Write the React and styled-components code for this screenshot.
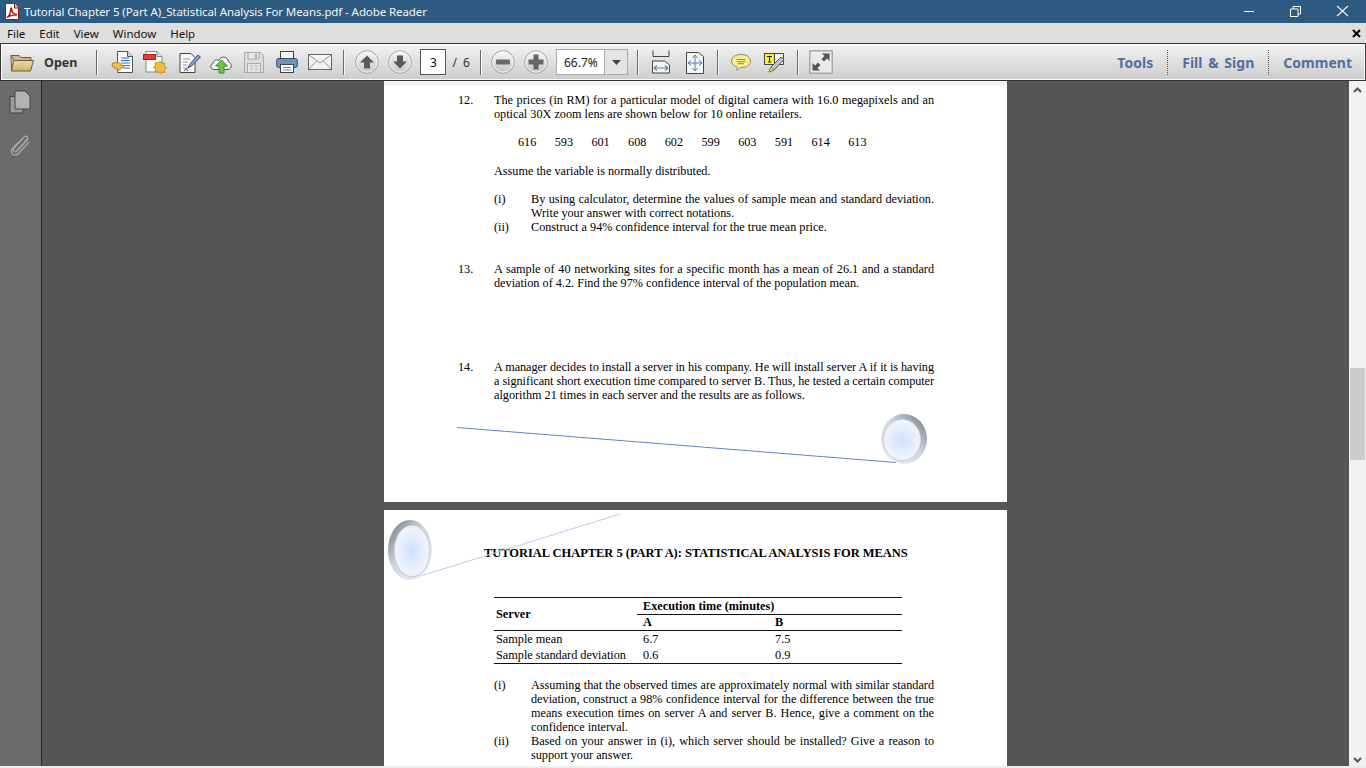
import React from "react";
import styled, { createGlobalStyle } from "styled-components";

const GlobalStyle = createGlobalStyle`
  html, body {
    margin: 0;
    padding: 0;
    height: 100%;
    overflow: hidden;
  }
  #root {
    height: 100%;
  }
`;

const Window = styled.div`
  display: flex;
  flex-direction: column;
  width: 1366px;
  height: 768px;
  overflow: hidden;
  background: #555;
  font-family: "Noto Sans", "Open Sans", sans-serif;
`;

const TitleBar = styled.div`
  display: flex;
  align-items: center;
  flex: none;
  height: 23px;
  padding-left: 5px;
  background: #2c5a80;
  color: #fff;
  font-size: 11.5px;
`;

const TitleText = styled.span`
  margin-left: 5px;
  letter-spacing: -0.09px;
  color: #f2f6fa;
`;

const WindowControls = styled.div`
  display: flex;
  align-items: center;
  margin-left: auto;
  padding-right: 17px;
  gap: 35px;
`;

const MenuBar = styled.div`
  display: flex;
  align-items: center;
  flex: none;
  height: 20px;
  padding: 0 5px 0 7px;
  gap: 14px;
  background: #dedede;
  color: #111;
  font-size: 11.5px;
  letter-spacing: -0.03px;
`;

const MenuClose = styled.span`
  display: flex;
  margin-left: auto;
`;

const Toolbar = styled.div`
  display: flex;
  align-items: center;
  flex: none;
  box-sizing: border-box;
  height: 38px;
  padding-left: 9px;
  border: 1px solid #333;
  border-right-color: #444;
  box-shadow: inset 0 0 0 1px #fafafa;
  background: linear-gradient(#f3f3f3, #cccccc);
`;

const OpenLabel = styled.span`
  margin-left: 10px;
  margin-right: 19px;
  font-size: 12.5px;
  font-weight: 700;
  color: #333;
`;

const Separator = styled.span`
  flex: none;
  width: 1px;
  height: 25px;
  margin: ${(p) => p.$m || "0 11px"};
  background: #6a6a6a;
  box-shadow: 1px 0 0 #f8f8f8;
`;

const ToolIcon = styled.svg`
  flex: none;
  display: block;
  width: ${(p) => p.$w || 24}px;
  height: 24px;
  margin-right: ${(p) => p.$gap ?? 8}px;
`;

const PageBox = styled.span`
  box-sizing: border-box;
  display: flex;
  align-items: center;
  justify-content: center;
  flex: none;
  width: 26px;
  height: 26px;
  border: 1px solid #555;
  background: #fff;
  color: #111;
  font-size: 12px;
`;

const PageTotal = styled.span`
  margin: 0 9px 0 6px;
  width: 19px;
  flex: none;
  font-size: 12px;
  color: #333;
  word-spacing: 3px;
  white-space: nowrap;
`;

const ZoomBox = styled.div`
  display: flex;
  flex: none;
  box-sizing: border-box;
  width: 72px;
  height: 26px;
  border: 1px solid #f8f8f8;
  outline: 1px solid #aaa;
  outline-offset: -1px;
  background: #fff;
`;

const ZoomValue = styled.span`
  flex: 1;
  display: flex;
  align-items: center;
  justify-content: center;
  color: #222;
  font-size: 12px;
`;

const ZoomArrow = styled.span`
  display: flex;
  align-items: center;
  justify-content: center;
  width: 22px;
  border-left: 1px solid #aaa;
  background: #e4e4e4;
`;

const ToolTabs = styled.div`
  display: flex;
  align-items: center;
  margin-left: auto;
  height: 25px;
  padding-right: 13px;
`;

const ToolTab = styled.span`
  display: flex;
  align-items: center;
  height: 100%;
  padding: 0 14px;
  border-left: ${(p) => (p.$first ? "0" : "1px dotted #555")};
  font-size: 14px;
  font-weight: 700;
  letter-spacing: 0.02px;
  word-spacing: 2px;
  color: #50709c;
  &:last-child {
    padding-right: 0;
  }
`;

const Body = styled.div`
  display: flex;
  flex: 1;
  min-height: 0;
`;

const SideRail = styled.div`
  display: flex;
  flex-direction: column;
  align-items: center;
  flex: none;
  box-sizing: border-box;
  width: 42px;
  padding: 9px 1px 0 0;
  gap: 19px;
  background: #6b6b6b;
  border-right: 1px solid #262626;
`;

const Canvas = styled.div`
  display: flex;
  flex-direction: column;
  align-items: center;
  flex: 1;
  min-width: 0;
  gap: 8px;
  overflow: hidden;
  background: #555;
`;

const Page = styled.div`
  position: relative;
  flex: none;
  box-sizing: border-box;
  width: 623px;
  height: ${(p) => p.$h}px;
  padding: ${(p) => p.$pad};
  border-top: ${(p) => (p.$shaded ? "4px solid #f1f1f1" : "0")};
  background: #fff;
  color: #000;
  font-family: "Liberation Serif", "Times New Roman", serif;
  font-size: 12.23px;
  line-height: 14px;
`;

const Question = styled.div`
  display: flex;
  margin-top: ${(p) => p.$top || 0}px;
`;

const Num = styled.span`
  flex: none;
  width: 36px;
`;

const QuestionBody = styled.div`
  width: 440px;
`;

const Para = styled.p`
  margin: ${(p) => p.$top || 0}px 0 0;
  text-align: ${(p) => (p.$plain ? "left" : "justify")};
`;

const FullLine = styled.span`
  display: block;
  white-space: nowrap;
  letter-spacing: ${(p) => p.$track || 0}px;
  text-align: justify;
  text-align-last: ${(p) => (p.$last ? "left" : "justify")};
`;

const NumberRow = styled.div`
  display: flex;
  margin: 14px 0 0 24px;
`;

const NumberCell = styled.span`
  width: 36.7px;
`;

const SubItem = styled.div`
  display: flex;
  margin-top: ${(p) => p.$top || 0}px;
`;

const SubMark = styled.span`
  flex: none;
  width: 37px;
`;

const SubText = styled.div`
  flex: 1;
  text-align: justify;
`;

const Decoration = styled.svg`
  position: absolute;
  overflow: visible;
  left: 0;
  top: 0;
  width: 623px;
  height: ${(p) => p.$h}px;
  pointer-events: none;
`;

const Heading = styled.h2`
  margin: 0;
  font-size: 12.44px;
  line-height: 14px;
  font-weight: 700;
  white-space: nowrap;
`;

const DataTable = styled.table`
  width: 408px;
  margin: 37px 0 0 10px;
  border-collapse: collapse;
  table-layout: fixed;
  border-top: 1px solid #111;
  border-bottom: 1px solid #111;
  line-height: 15px;
  font-size: 12.26px;
`;

const Cell = styled.td`
  padding: ${(p) => p.$pt ?? 0}px 0 0 ${(p) => p.$pl ?? 2}px;
  height: ${(p) => p.$h ?? 16}px;
  font-weight: ${(p) => (p.$bold ? 700 : 400)};
  border-bottom: ${(p) => (p.$rule ? "1px solid #111" : "0")};
  white-space: nowrap;
`;

const Sub2 = styled.div`
  width: 440px;
  margin: 14px 0 0 10px;
`;

const StatusEdge = styled.div`
  flex: none;
  height: 2px;
  background: #ececec;
`;

const Scrollbar = styled.div`
  display: flex;
  flex-direction: column;
  align-items: center;
  flex: none;
  box-sizing: border-box;
  width: 17px;
  padding-top: 6px;
  background: #f1f1f1;
`;

const ScrollThumb = styled.div`
  width: 15px;
  height: 92px;
  margin-top: 275px;
  background: #cdcdcd;
`;

const ScrollDown = styled.div`
  margin-top: auto;
  padding-bottom: 3px;
  display: flex;
`;

const AdobeLogo = () => (
  <svg width="14" height="17" viewBox="0 0 14 17">
    <path d="M.5.5h9.500l3.500 3.500v12.500H.5z" fill="#fff" stroke="#8c1c1c" />
    <path d="M9.500 1v4h4" fill="#c9c0c0" stroke="#8c1c1c" />
    <path
      d="M2 14.500c2.500-1.500 3.500-5 3.800-8.500.2-1.500 1-1 .9.500-.2 2 1.800 5 5.300 5.300-3 0-7.500.7-10 2.700z"
      fill="none"
      stroke="#b01818"
      strokeWidth="1.500"
    />
  </svg>
);

const Minimize = () => (
  <svg width="11" height="11" viewBox="0 0 11 11">
    <path d="M0 5.500h10" stroke="#fff" />
  </svg>
);

const Restore = () => (
  <svg width="11" height="11" viewBox="0 0 11 11">
    <path d="M.500 3h7.500v7.500H.500zM3 3V.500h7.500V8H8" fill="none" stroke="#fff" />
  </svg>
);

const CloseIcon = () => (
  <svg width="13" height="13" viewBox="0 0 13 13">
    <path d="M1 1l11 10M12 1L1 11" stroke="#f4f4f4" strokeWidth="1.100" />
  </svg>
);

const Folder = () => (
  <ToolIcon $w={24} $gap={0} viewBox="0 0 24 24">
    <defs>
      <linearGradient id="fd" x1="0" y1="0" x2="0" y2="1">
        <stop offset="0" stopColor="#f8eec0" />
        <stop offset="1" stopColor="#d0b26a" />
      </linearGradient>
    </defs>
    <path d="M1 5.500h8l2 2h10v3H4z" fill="#cdb98c" stroke="#6d5c3c" />
    <path d="M1.500 21 1 5.500M3.500 10.500h20l-3 10.500H1.500z" fill="url(#fd)" stroke="#6d5c3c" />
  </ToolIcon>
);

const ConvertIcon = () => (
  <ToolIcon viewBox="0 0 24 24">
    <path d="M6.500 1.500h10l5 5v16h-15z" fill="#fff" stroke="#555" />
    <path d="M16.500 1.500v5h5" fill="#ddd" stroke="#555" />
    <path d="M10 8h8M10 10.500h9M10 13h9M10 15.500h9M12 18h7" stroke="#2f6fd0" strokeWidth="1.200" />
    <path d="M1 14c1-1.500 3-1.500 5.500-1v-1.500l6 5-6 5V19c-3 0-5.500-2-5.500-5z" fill="#eebf58" stroke="#b17f22" />
  </ToolIcon>
);

const CreateIcon = () => (
  <ToolIcon $gap={12} viewBox="0 0 24 24">
    <path d="M3 1.500h11l5 5V22H3z" fill="#fbfbfb" stroke="#888" />
    <path d="M14 1.500v5h5" fill="#ddd" stroke="#888" />
    <rect x="0.500" y="4.500" width="12" height="5" fill="#e43c3c" stroke="#a82020" />
    <path
      d="M17 11l1.800 2.500 3-.5-.5 3 2.500 1.800-2.500 1.800.5 3-3-.5L17 24l-1.800-2.400-3 .5.500-3-2.500-1.800 2.500-1.800-.5-3 3 .5z"
      fill="#f3bb3c"
      stroke="#b78420"
      strokeWidth=".8"
    />
  </ToolIcon>
);

const EditIcon = () => (
  <ToolIcon $w={22} $gap={8} viewBox="0 0 22 24">
    <path d="M1 3.500h11l4 4v15H1z" fill="#f8f8f8" stroke="#444" />
    <path d="M4 9h7M4 12h5M4 15h4M4 18h5" stroke="#999" />
    <path d="M9 18l1.500-3.500L19 5l2.500 2.200L12.500 16z" fill="#7fa3d2" stroke="#3a4f75" />
    <path d="M5 21c1-1 2-3 3-2 .5 1-1 2 1 1" stroke="#444" fill="none" />
  </ToolIcon>
);

const CloudIcon = () => (
  <ToolIcon $gap={11} viewBox="0 0 24 24">
    <path
      d="M5 19.500C1.500 19.500.500 15 4 13.500 4.500 10 8 9 10 10.500 11.500 5.500 19 6 19.500 12c3.500.500 4 7-.5 7.500z"
      fill="#f4f4f4"
      stroke="#555"
    />
    <path d="M12.500 10l6 6h-3.500v7H10v-7H6.500z" fill="#72c04a" stroke="#3f8a26" />
  </ToolIcon>
);

const SaveIcon = () => (
  <ToolIcon $w={20} $gap={12} viewBox="0 0 20 24">
    <path d="M.500 2.500h16l3 3v17H.500z" fill="#dcdcdc" stroke="#aaa" />
    <path d="M4 3v6h11V3" fill="#e8e8e8" stroke="#aaa" />
    <path d="M11 4h2v4h-2z" fill="#aaa" />
    <rect x="3.500" y="13.500" width="13" height="9" fill="#e4e4e4" stroke="#aaa" />
    <path d="M6 16h3M11 16h3M6 19h3M11 19h3" stroke="#b5b5b5" />
  </ToolIcon>
);

const PrintIcon = () => (
  <ToolIcon $w={22} $gap={10} viewBox="0 0 22 24">
    <rect x="4.500" y="1.500" width="13" height="8" fill="#f4f4f4" stroke="#444" />
    <rect x=".7" y="8.500" width="20.600" height="9" rx="2" fill="#6d95bc" stroke="#2d4a68" />
    <rect x="4.500" y="14.500" width="13" height="8" fill="#fff" stroke="#444" />
    <path d="M7 17.500h8M7 20h8" stroke="#888" />
  </ToolIcon>
);

const MailIcon = () => (
  <ToolIcon $gap={0} viewBox="0 0 24 24">
    <rect x=".5" y="4.500" width="23" height="15" fill="#f2f2f2" stroke="#666" />
    <path d="M1 5l11 8 11-8M1 19l8-8.500M23 19l-8-8.500" fill="none" stroke="#999" />
  </ToolIcon>
);

const RoundButton = ({ children, gap }) => (
  <ToolIcon $gap={gap} viewBox="0 0 24 24">
    <defs>
      <linearGradient id="rb" x1="0" y1="0" x2="0" y2="1">
        <stop offset="0" stopColor="#fafafa" />
        <stop offset="1" stopColor="#c4c4c4" />
      </linearGradient>
    </defs>
    <circle cx="12" cy="12" r="11.300" fill="url(#rb)" stroke="#a2a2a2" />
    <circle cx="12" cy="12" r="10.200" fill="none" stroke="#f4f4f4" />
    {children}
  </ToolIcon>
);

const FitWidthIcon = () => (
  <ToolIcon $w={18} $gap={16} viewBox="0 0 18 24">
    <path d="M1 .5v6M17 .5v6M1 6.500h16" fill="none" stroke="#444" />
    <path d="M.5 23v-12h12l5 4v8z" fill="#f4f4f4" stroke="#444" />
    <path d="M2 18h14M2 18l3-2.500M2 18l3 2.500M16 18l-3-2.500M16 18l-3 2.500" fill="none" stroke="#5b80b5" strokeWidth="1.200" />
  </ToolIcon>
);

const FitPageIcon = () => (
  <ToolIcon $w={18} $gap={0} viewBox="0 0 18 24">
    <path d="M.5 2.500h12l5 4v17H.5z" fill="#f4f4f4" stroke="#444" />
    <path
      d="M9 5v16M2 13h14M9 5l-2.500 3M9 5l2.500 3M9 21l-2.500-3M9 21l2.500-3M2 13l3-2.500M2 13l3 2.500M16 13l-3-2.500M16 13l-3 2.500"
      fill="none"
      stroke="#5b80b5"
    />
  </ToolIcon>
);

const CommentIcon = () => (
  <ToolIcon $w={20} $gap={13} viewBox="0 0 20 24">
    <path
      d="M10 4.500c5 0 9.500 2.300 9.500 6.500S15 17.500 11 17.500c-1 0-1.800 0-2.500.5-1 1-2 2.500-3 2 .5-.5.8-2 .4-3.300C3 16 .5 14 .5 11 .5 6.800 5 4.500 10 4.500z"
      fill="#f8ef84"
      stroke="#888"
    />
    <path d="M5.500 9.500h9M5.500 11.700h9M7 13.700h6" stroke="#8e8a5a" />
  </ToolIcon>
);

const HighlightIcon = () => (
  <ToolIcon $w={21} $gap={0} viewBox="0 0 21 24">
    <path d="M.5 3.500h19v11H.5z" fill="#f4f4f4" stroke="#444" />
    <rect x=".5" y="3.500" width="10" height="11" fill="#f6ee3a" stroke="#444" />
    <path d="M3 6.500h5M5.500 6.500v5.500M4 12h3" stroke="#222" fill="none" />
    <path d="M5 22l2-5 10-10 3 2.500L10 20z" fill="#c0c6cf" stroke="#555" />
    <path d="M5 22l2-5 3 3z" fill="#e8dc7c" stroke="#8c8430" />
  </ToolIcon>
);

const ExpandIcon = () => (
  <ToolIcon $gap={0} viewBox="0 0 24 24">
    <rect x=".8" y=".8" width="22.400" height="22.400" fill="#e9e9e9" stroke="#999" strokeWidth="1.200" />
    <path d="M13 3.500h7.500V11L18 8.500 15 11.500 12.500 9 15.500 6z" fill="#555" />
    <path d="M11 20.500H3.500V13L6 15.500 9 12.500 11.500 15 8.500 18z" fill="#555" />
  </ToolIcon>
);

const Disc = ({ cx, cy, rx, ry, dark, id }) => (
  <>
    <defs>
      <radialGradient id={id} cx="0.5" cy="0.5" r="0.5">
        <stop offset="0" stopColor="#cfe0fb" />
        <stop offset="0.65" stopColor="#e6eefb" />
        <stop offset="0.85" stopColor="#f0f3f8" />
        <stop offset="1" stopColor="#e8ecf2" />
      </radialGradient>
      <linearGradient id={`${id}r`} x1={dark ? "1" : "0"} y1="0" x2={dark ? "0" : "1"} y2="1">
        <stop offset="0" stopColor="#6f757e" />
        <stop offset="0.45" stopColor="#cfd6e0" />
        <stop offset="1" stopColor="#f6f8fb" />
      </linearGradient>
    </defs>
    <ellipse cx={cx} cy={cy} rx={rx} ry={ry} fill={`url(#${id}r)`} />
    <ellipse cx={dark ? cx - 2 : cx + 2} cy={cy + 1} rx={rx - 4} ry={ry - 4} fill={`url(#${id})`} stroke="#aab4c2" strokeWidth=".6" />
  </>
);

const ArrowUp = <path d="M12 5.500l7 7h-4v6H9v-6H5z" fill="#5a5a5a" />;
const ArrowDown = <path d="M12 18.500l-7-7h4v-6h6v6h4z" fill="#5a5a5a" />;
const MinusGlyph = <rect x="5" y="9.500" width="14" height="5" rx="1" fill="#6a6a6a" />;
const PlusGlyph = <path d="M9.500 4.500h5v5h5v5h-5v5h-5v-5h-5v-5h5z" fill="#666" />;

const numbers = ["616", "593", "601", "608", "602", "599", "603", "591", "614", "613"];

export default function App() {
  return (
    <Window>
      <GlobalStyle />
      <TitleBar>
        <AdobeLogo />
        <TitleText>Tutorial Chapter 5 (Part A)_Statistical Analysis For Means.pdf - Adobe Reader</TitleText>
        <WindowControls>
          <Minimize />
          <Restore />
          <CloseIcon />
        </WindowControls>
      </TitleBar>
      <MenuBar>
        <span>File</span>
        <span>Edit</span>
        <span>View</span>
        <span>Window</span>
        <span>Help</span>
        <MenuClose>
          <svg width="9" height="9" viewBox="0 0 9 9">
            <path d="M1 1l7 7M8 1L1 8" stroke="#000" strokeWidth="2" />
          </svg>
        </MenuClose>
      </MenuBar>
      <Toolbar>
        <Folder />
        <OpenLabel>Open</OpenLabel>
        <Separator $m="0 14px 0 0" />
        <ConvertIcon />
        <CreateIcon />
        <EditIcon />
        <CloudIcon />
        <SaveIcon />
        <PrintIcon />
        <MailIcon />
        <Separator />
        <RoundButton gap={9}>{ArrowUp}</RoundButton>
        <RoundButton gap={8}>{ArrowDown}</RoundButton>
        <PageBox>3</PageBox>
        <PageTotal>/ 6</PageTotal>
        <Separator $m="0 10px 0 0" />
        <RoundButton gap={9}>{MinusGlyph}</RoundButton>
        <RoundButton gap={8}>{PlusGlyph}</RoundButton>
        <ZoomBox>
          <ZoomValue>66.7%</ZoomValue>
          <ZoomArrow>
            <svg width="9" height="5" viewBox="0 0 9 5">
              <path d="M0 0h9L4.500 5z" fill="#444" />
            </svg>
          </ZoomArrow>
        </ZoomBox>
        <Separator $m="0 14px 0 9px" />
        <FitWidthIcon />
        <FitPageIcon />
        <Separator $m="0 13px 0 13px" />
        <CommentIcon />
        <HighlightIcon />
        <Separator $m="0 11px 0 12px" />
        <ExpandIcon />
        <ToolTabs>
          <ToolTab $first>Tools</ToolTab>
          <ToolTab>Fill &amp; Sign</ToolTab>
          <ToolTab>Comment</ToolTab>
        </ToolTabs>
      </Toolbar>
      <Body>
        <SideRail>
          <svg width="22" height="24" viewBox="0 0 22 24">
            <path d="M1 6.500h13v16.500H1z" fill="#9b9b9b" stroke="#444" />
            <path d="M6 1h10l5 5v13H6z" fill="#b2b2b2" stroke="#444" />
          </svg>
          <svg width="22" height="24" viewBox="0 0 22 24">
            <path
              d="M19 6 8 18c-2 2-5 0-3-3L15 4c2-2 5 0 3 2.500L8 17.500M15 4 3.500 15.500c-3.500 4 2 9 6 5L20 9"
              fill="none"
              stroke="#a8a8a8"
              strokeWidth="1.300"
            />
          </svg>
        </SideRail>
        <Canvas>
          <Page $h={421} $shaded $pad="8px 0 0 74px">
            <Question>
              <Num>12.</Num>
              <QuestionBody>
                <Para>
                  The prices (in RM) for a particular model of digital camera with 16.0 megapixels and an optical 30X
                  zoom lens are shown below for 10 online retailers.
                </Para>
                <NumberRow>
                  {numbers.map((n) => (
                    <NumberCell key={n}>{n}</NumberCell>
                  ))}
                </NumberRow>
                <Para $top={15} $plain>
                  Assume the variable is normally distributed.
                </Para>
                <SubItem $top={14}>
                  <SubMark>(i)</SubMark>
                  <SubText>
                    By using calculator, determine the values of sample mean and standard deviation. Write your answer
                    with correct notations.
                  </SubText>
                </SubItem>
                <SubItem>
                  <SubMark>(ii)</SubMark>
                  <SubText>Construct a 94% confidence interval for the true mean price.</SubText>
                </SubItem>
              </QuestionBody>
            </Question>
            <Question $top={28}>
              <Num>13.</Num>
              <QuestionBody>
                <Para>
                  A sample of 40 networking sites for a specific month has a mean of 26.1 and a standard deviation of
                  4.2. Find the 97% confidence interval of the population mean.
                </Para>
              </QuestionBody>
            </Question>
            <Question $top={70}>
              <Num>14.</Num>
              <QuestionBody>
                <Para>
                  <FullLine $track={-0.05}>
                    A manager decides to install a server in his company. He will install server A if it is having
                  </FullLine>
                  <FullLine $track={-0.05}>
                    a significant short execution time compared to server B. Thus, he tested a certain computer
                  </FullLine>
                  <FullLine $last>algorithm 21 times in each server and the results are as follows.</FullLine>
                </Para>
              </QuestionBody>
            </Question>
            <Decoration $h={417} viewBox="0 0 623 417">
              <path d="M73 342.500 512 377.500" stroke="#5b86c4" strokeWidth="1" />
              <Disc id="d1" cx={520} cy={354} rx={23} ry={25} dark />
            </Decoration>
          </Page>
          <Page $h={300} $pad="36px 0 0 100px">
            <Heading>TUTORIAL CHAPTER 5 (PART A): STATISTICAL ANALYSIS FOR MEANS</Heading>
            <DataTable>
              <colgroup>
                <col style={{ width: 143 }} />
                <col style={{ width: 133 }} />
                <col style={{ width: 132 }} />
              </colgroup>
              <tbody>
                <tr>
                  <Cell $bold $rule $pt={1} rowSpan={2}>
                    Server
                  </Cell>
                  <Cell $bold $rule colSpan={2} $pl={6}>
                    Execution time (minutes)
                  </Cell>
                </tr>
                <tr>
                  <Cell $bold $rule $h={15} $pl={6}>
                    A
                  </Cell>
                  <Cell $bold $rule $h={15} $pl={5}>
                    B
                  </Cell>
                </tr>
                <tr>
                  <Cell>Sample mean</Cell>
                  <Cell $pl={6}>6.7</Cell>
                  <Cell $pl={5}>7.5</Cell>
                </tr>
                <tr>
                  <Cell>Sample standard deviation</Cell>
                  <Cell $pl={6}>0.6</Cell>
                  <Cell $pl={5}>0.9</Cell>
                </tr>
              </tbody>
            </DataTable>
            <Sub2>
              <SubItem>
                <SubMark>(i)</SubMark>
                <SubText>
                  Assuming that the observed times are approximately normal with similar standard deviation, construct
                  a 98% confidence interval for the difference between the true means execution times on server A and
                  server B. Hence, give a comment on the confidence interval.
                </SubText>
              </SubItem>
              <SubItem>
                <SubMark>(ii)</SubMark>
                <SubText>
                  Based on your answer in (i), which server should be installed? Give a reason to support your answer.
                </SubText>
              </SubItem>
            </Sub2>
            <Decoration $h={300} viewBox="0 0 623 300">
              <path d="M236 4 30 68" stroke="#b4cbe8" strokeWidth="1" />
              <Disc id="d2" cx={26} cy={40} rx={22} ry={30} />
            </Decoration>
          </Page>
        </Canvas>
        <Scrollbar>
          <svg width="9" height="6" viewBox="0 0 9 6">
            <path d="M1 5l3.500-3.500L8 5" fill="none" stroke="#555" strokeWidth="2" />
          </svg>
          <ScrollThumb />
          <ScrollDown>
            <svg width="9" height="6" viewBox="0 0 9 6">
              <path d="M1 1l3.500 3.500L8 1" fill="none" stroke="#555" strokeWidth="2" />
            </svg>
          </ScrollDown>
        </Scrollbar>
      </Body>
      <StatusEdge />
    </Window>
  );
}
